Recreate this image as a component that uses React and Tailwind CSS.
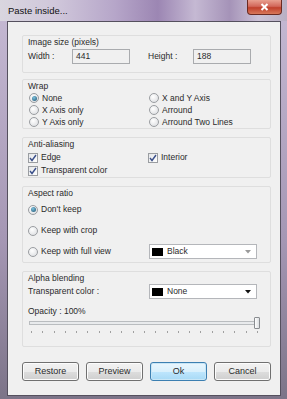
import React from 'react';

const font = { fontFamily: '"Liberation Sans", "DejaVu Sans", sans-serif' };

function Radio({ checked }) {
  return (
    <span className="w-[10px] h-[10px] rounded-full border border-[#9a9da1] bg-[radial-gradient(circle_at_40%_35%,#ffffff,#d8dadd)] flex items-center justify-center shrink-0">
      {checked && <span className="w-[5px] h-[5px] rounded-full bg-[radial-gradient(circle_at_40%_35%,#7ec3e0,#1b4f6c)]" />}
    </span>
  );
}

function Check() {
  return (
    <span className="w-[10px] h-[10px] border border-[#9a9da1] bg-[linear-gradient(135deg,#e4e6e8,#ffffff)] flex items-center justify-center shrink-0">
      <svg width="8" height="8" viewBox="0 0 8 8">
        <path d="M1 4 L3 6.5 L7 1" fill="none" stroke="#3a4f8a" strokeWidth="1.4" />
      </svg>
    </span>
  );
}

function Group({ label, className, children }) {
  return (
    <div className={`border border-[#dedede] rounded-[2px] pl-[5px] pr-[4px] ${className}`}>
      <div className="h-[12px] leading-[12px]">{label}</div>
      {children}
    </div>
  );
}

function Select({ text, dim }) {
  return (
    <div className="w-[108px] h-[15px] bg-white border border-[#b4b6ba] flex items-center pl-[2px] pr-[5px]">
      <span className="w-[11px] h-[8px] bg-black" />
      <span className="ml-[4px] flex-1 leading-none">{text}</span>
      <svg width="6" height="4" viewBox="0 0 6 4">
        <path d="M0 0 L6 0 L3 3.5 Z" fill={dim ? '#9a9a9a' : '#111'} />
      </svg>
    </div>
  );
}

function Btn({ children, primary }) {
  return (
    <div
      className={`w-[57px] h-[19px] rounded-[3px] flex items-center justify-center text-[9px] border ${
        primary
          ? 'border-[#3c7fb1] bg-[linear-gradient(180deg,#eaf6fd,#d9f0fc_50%,#bee6fd_51%,#a7d9f5)] shadow-[inset_0_0_0_1px_#c8e6f6]'
          : 'border-[#707070] bg-[linear-gradient(180deg,#f2f2f2,#ebebeb_50%,#dddddd_51%,#cfcfcf)] shadow-[inset_0_0_0_1px_#fcfcfc]'
      }`}
    >
      {children}
    </div>
  );
}

export default function App() {
  const ticks = Array.from({ length: 21 }, (_, i) => i);
  return (
    <div
      style={font}
      className="w-[287px] h-[399px] flex flex-col bg-[linear-gradient(180deg,#c6bad4,#a597b4_60%,#7c7488)] text-[#2a2a2a] text-[8.5px] overflow-hidden"
    >
      {/* title bar */}
      <div className="h-[21px] relative bg-[linear-gradient(90deg,#d9d6df,#cfc6da_20%,#b6a6c9_40%,#9c86b3_55%,#c5b9d3_68%,#a593b8_80%,#cbc2d6_90%,#b9b0c4)]">
        <div className="absolute left-[8px] top-[5px] text-[9.5px] leading-[12px] text-[#111]">Paste inside...</div>
        <div className="absolute right-[5px] top-0 w-[35px] h-[15px] rounded-b-[4px] border border-t-0 border-[#6b2a22] bg-[linear-gradient(180deg,#e8a090,#d2685a_45%,#c0402c_55%,#d8785a)] flex items-center justify-center">
          <svg width="9" height="8" viewBox="0 0 9 8">
            <path d="M1.5 1 L7.5 7 M7.5 1 L1.5 7" stroke="#fff" strokeWidth="2" />
          </svg>
        </div>
      </div>

      {/* client */}
      <div className="ml-[7px] mr-[6px] mb-[3px] flex-1 border border-[#55505e] bg-[#f0f0f0] pl-[14px] pt-[13px] flex flex-col">
        <div className="w-[249px] flex flex-col">
          <Group label="Image size (pixels)" className="h-[38px]">
            <div className="flex items-center h-[15px] mt-[1px]">
              <span className="w-[44px]">Width :</span>
              <div className="w-[58px] h-[15px] border border-[#a9abae] bg-[#f0f0f0] pl-[3px] leading-[13px]">441</div>
              <span className="ml-[18px] w-[45px]">Height :</span>
              <div className="w-[58px] h-[15px] border border-[#a9abae] bg-[#f0f0f0] pl-[3px] leading-[13px]">188</div>
            </div>
          </Group>

          <Group label="Wrap" className="h-[50px] mt-[6px]">
            <div className="grid grid-cols-[120px_1fr] pl-[1px]">
              {[
                ['None', true, 'X and Y Axis'],
                ['X Axis only', false, 'Arround'],
                ['Y Axis only', false, 'Arround Two Lines'],
              ].map(([a, c, b]) => (
                <React.Fragment key={a}>
                  <div className="h-[12px] flex items-center gap-[3px]">
                    <Radio checked={c} />
                    <span>{a}</span>
                  </div>
                  <div className="h-[12px] flex items-center gap-[3px]">
                    <Radio />
                    <span>{b}</span>
                  </div>
                </React.Fragment>
              ))}
            </div>
          </Group>

          <Group label="Anti-aliasing" className="h-[41px] mt-[8px]">
            <div className="grid grid-cols-[120px_1fr] mt-[1px]">
              <div className="h-[13px] flex items-center gap-[3px]">
                <Check />
                <span>Edge</span>
              </div>
              <div className="h-[13px] flex items-center gap-[3px]">
                <Check />
                <span>Interior</span>
              </div>
              <div className="h-[13px] flex items-center gap-[3px]">
                <Check />
                <span>Transparent color</span>
              </div>
            </div>
          </Group>

          <Group label="Aspect ratio" className="h-[77px] mt-[8px]">
            <div className="flex flex-col">
              <div className="h-[21px] flex items-center gap-[3px]">
                <Radio checked />
                <span>Don't keep</span>
              </div>
              <div className="h-[21px] flex items-center gap-[3px]">
                <Radio />
                <span>Keep with crop</span>
              </div>
              <div className="h-[21px] flex items-center">
                <div className="w-[121px] flex items-center gap-[3px]">
                  <Radio />
                  <span>Keep with full view</span>
                </div>
                <Select text="Black" dim />
              </div>
            </div>
          </Group>

          <Group label="Alpha blending" className="h-[76px] mt-[8px]">
            <div className="flex items-center h-[15px]">
              <span className="w-[121px]">Transparent color :</span>
              <Select text="None" />
            </div>
            <div className="h-[12px] leading-[12px] mt-[6px]">Opacity : 100%</div>
            <div className="relative h-[12px] w-[231px] ml-[1px]">
              <div className="absolute left-0 right-0 top-[4px] h-[4px] border border-[#b9bcbf] bg-[#e8eaec]" />
              <div className="absolute right-0 top-0 w-[6px] h-[12px] border border-[#8a8d91] rounded-[1px] bg-[linear-gradient(90deg,#ffffff,#dcdfe2)]" />
            </div>
            <div className="flex justify-between w-[227px] ml-[3px] mt-[2px]">
              {ticks.map((t) => (
                <span key={t} className="w-[1px] h-[2px] bg-[#a0a0a0]" />
              ))}
            </div>
          </Group>

          <div className="flex gap-[7px] mt-[15px]">
            <Btn>Restore</Btn>
            <Btn>Preview</Btn>
            <Btn primary>Ok</Btn>
            <Btn>Cancel</Btn>
          </div>
        </div>
      </div>
    </div>
  );
}
